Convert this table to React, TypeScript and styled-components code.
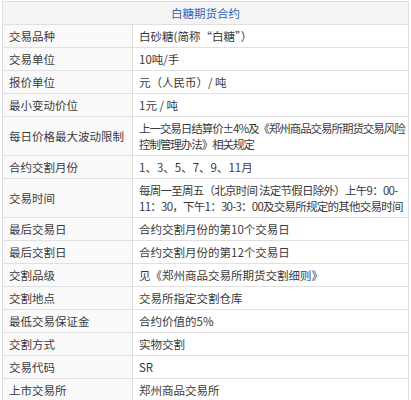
import React from "react";
import styled, { createGlobalStyle } from "styled-components";

const Global = createGlobalStyle`
  html, body { margin: 0; padding: 0; background: #ffffff; }
  body { font-family: "Noto Sans CJK SC", "Noto Sans", "Liberation Sans", sans-serif; }
`;

const Wrap = styled.div`
  padding: 1px 2px 0 2px;
`;

const Table = styled.table`
  width: 407px;
  table-layout: fixed;
  border-collapse: separate;
  border-spacing: 0;
  border: 1px solid #dedede;
  font-size: 11.5px;
  color: #3a3a3a;
`;

const LabelCol = styled.col`
  width: 130px;
`;

const ValueCol = styled.col``;

const HeadCell = styled.th`
  background: #f5f5f5;
  color: #2f66b8;
  font-weight: normal;
  text-align: center;
  height: 22px;
  padding: 0;
  line-height: 16px;
  border-bottom: 1px solid #e0e0e0;
`;

const Row = styled.tr``;

const Cell = styled.td<{ $label?: boolean; $last?: boolean; $spacing?: number }>`
  padding: 3px 2px 3px 6px;
  line-height: 16px;
  vertical-align: middle;
  text-align: left;
  background: ${(p) => (p.$label ? "#fafafa" : "#ffffff")};
  border-bottom: ${(p) => (p.$last ? "none" : "1px solid #e0e0e0")};
  border-right: ${(p) => (p.$label ? "1px solid #e0e0e0" : "none")};
  white-space: nowrap;
  overflow: hidden;
  letter-spacing: ${(p) => p.$spacing ?? 0}px;
`;

type RowData = { k: string; v: React.ReactNode; spacing?: number };

const rows: RowData[] = [
  { k: "交易品种", v: "白砂糖(简称“白糖”）" },
  { k: "交易单位", v: "10吨/手" },
  { k: "报价单位", v: "元（人民币）/ 吨" },
  { k: "最小变动价位", v: "1元 / 吨" },
  {
    k: "每日价格最大波动限制",
    spacing: -1.05,
    v: (
      <>
        上一交易日结算价±4%及《郑州商品交易所期货交易风险
        <br />
        控制管理办法》相关规定
      </>
    ),
  },
  { k: "合约交割月份", v: "1、3、5、7、9、11月" },
  {
    k: "交易时间",
    spacing: -0.75,
    v: (
      <>
        每周一至周五（北京时间 法定节假日除外）上午9：00-
        <br />
        11：30，下午1：30-3：00及交易所规定的其他交易时间
      </>
    ),
  },
  { k: "最后交易日", v: "合约交割月份的第10个交易日" },
  { k: "最后交割日", v: "合约交割月份的第12个交易日" },
  { k: "交割品级", v: "见《郑州商品交易所期货交割细则》" },
  { k: "交割地点", v: "交易所指定交割仓库" },
  { k: "最低交易保证金", v: "合约价值的5%" },
  { k: "交割方式", v: "实物交割" },
  { k: "交易代码", v: "SR" },
  { k: "上市交易所", v: "郑州商品交易所" },
];

export default function App() {
  return (
    <>
      <Global />
      <Wrap>
        <Table>
          <colgroup>
            <LabelCol />
            <ValueCol />
          </colgroup>
          <thead>
            <tr>
              <HeadCell colSpan={2}>白糖期货合约</HeadCell>
            </tr>
          </thead>
          <tbody>
            {rows.map((r, i) => {
              const last = i === rows.length - 1;
              return (
                <Row key={r.k}>
                  <Cell $label $last={last}>
                    {r.k}
                  </Cell>
                  <Cell $last={last} $spacing={r.spacing}>
                    {r.v}
                  </Cell>
                </Row>
              );
            })}
          </tbody>
        </Table>
      </Wrap>
    </>
  );
}
